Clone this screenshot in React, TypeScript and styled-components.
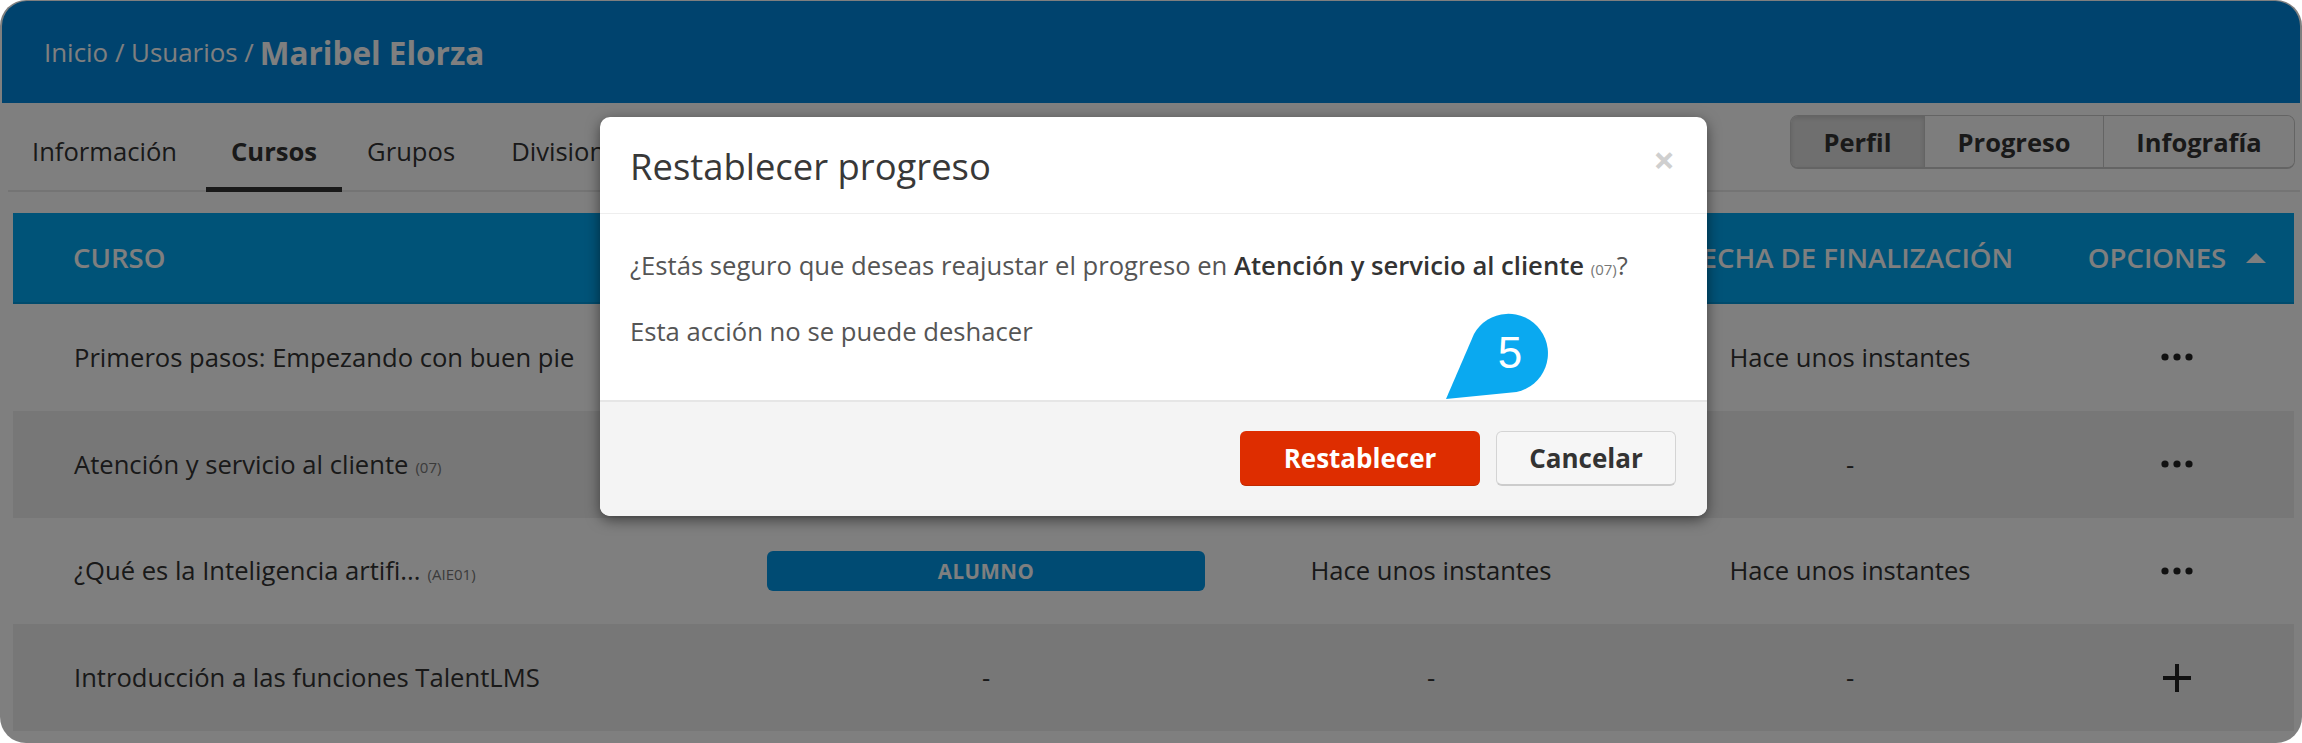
import React from 'react';
import styled, { createGlobalStyle } from 'styled-components';

const GlobalStyle = createGlobalStyle`
  html, body {
    margin: 0;
    padding: 0;
    background: #fff;
  }
  body {
    font-family: 'Open Sans', 'Liberation Sans', sans-serif;
    overflow: hidden;
  }
`;

const Frame = styled.div`
  position: relative;
  width: 2302px;
  height: 743px;
  box-sizing: border-box;
  overflow: hidden;
  border-radius: 26px;
  background: #fff;
  color: #333;
`;
const TopBar = styled.header`
  height: 102px;
  margin: 1px 2px 0 2px;
  border-radius: 25px 25px 0 0;
  box-sizing: border-box;
  padding: 0 42px 0;
  display: flex;
  align-items: center;
  gap: 6px;
  background: #0086dc;
  color: #fff;
  font-size: 25.9px;
`;
const Crumbs = styled.span``;
const Current = styled.strong`
  font-size: 31.5px;
  font-weight: 700;
`;
const NavRow = styled.div`
  height: 89px;
  margin: 0 2px 0 8px;
  box-sizing: border-box;
  padding: 12px 5px 0 24px;
  border-bottom: 2px solid #e8e8e8;
  display: flex;
  justify-content: space-between;
  align-items: flex-start;
`;
const Tabs = styled.nav`
  display: flex;
  height: 77px;
  gap: 0;
`;
const Tab = styled.a<{ $active?: boolean }>`
  box-sizing: border-box;
  height: 77px;
  padding: 0 25px;
  display: flex;
  align-items: center;
  font-size: 25.6px;
  font-weight: ${({ $active }) => ($active ? 700 : 400)};
  color: #333;
  border-bottom: ${({ $active }) => ($active ? '5px solid #333' : '5px solid transparent')};
  white-space: nowrap;
  &:first-child {
    padding-left: 0;
    padding-right: 29px;
  }
  &:last-child {
    margin-left: 6px;
  }
`;
const SwitchGroup = styled.div`
  display: flex;
  height: 54px;
  box-sizing: border-box;
  border: 1px solid #c8c8c8;
  border-bottom-width: 2px;
  border-radius: 8px;
  overflow: hidden;
  background: #fafafa;
`;
const SwitchButton = styled.button<{ $active?: boolean; $width: number }>`
  width: ${({ $width }) => $width}px;
  border: 0;
  border-right: 1px solid #c8c8c8;
  padding: 0;
  font-family: inherit;
  font-size: 25.5px;
  font-weight: 700;
  color: #333;
  background: ${({ $active }) => ($active ? '#dedede' : '#fafafa')};
  box-shadow: ${({ $active }) => ($active ? 'inset 0 2px 4px rgba(0,0,0,.12)' : 'none')};
  &:last-child {
    border-right: 0;
  }
`;
const Table = styled.div`
  margin: 21px 8px 0 13px;
`;
const Cols = `
  display: grid;
  grid-template-columns: 711px 524px 366px 472px 182px;
  padding-right: 26px;
  align-items: center;
`;
const HeadRow = styled.div`
  ${Cols}
  height: 91px;
  padding-bottom: 2px;
  background: #00a6f0;
  border-bottom: 2px solid #0096da;
  box-sizing: border-box;
  color: #fff;
  font-size: 27.6px;
  font-weight: 600;
`;
const HeadCell = styled.div<{ $left?: boolean }>`
  text-align: ${({ $left }) => ($left ? 'left' : 'center')};
  padding-left: ${({ $left }) => ($left ? '60px' : '0')};
  white-space: nowrap;
`;
const SortArrow = styled.span`
  display: inline-block;
  margin-left: 20px;
  vertical-align: 5px;
  border-left: 10px solid transparent;
  border-right: 10px solid transparent;
  border-bottom: 10px solid #fff;
`;
const Row = styled.div<{ $alt?: boolean }>`
  ${Cols}
  height: 106.75px;
  background: ${({ $alt }) => ($alt ? '#eeeeee' : '#fff')};
  font-size: 25.6px;
`;
const Cell = styled.div<{ $left?: boolean }>`
  display: flex;
  justify-content: ${({ $left }) => ($left ? 'flex-start' : 'center')};
  align-items: center;
  padding-left: ${({ $left }) => ($left ? '61px' : '0')};
  gap: 7px;
  white-space: nowrap;
`;
const Code = styled.small`
  font-size: 15px;
  color: #777;
  margin-top: 6px;
`;
const RoleBadge = styled.div`
  width: 438px;
  height: 40px;
  border-radius: 6px;
  background: #0096e6;
  color: #fff;
  font-size: 20.5px;
  font-weight: 700;
  display: flex;
  align-items: center;
  justify-content: center;
  letter-spacing: 0.5px;
`;
const Dim = styled.div`
  position: absolute;
  inset: 0;
  background: rgba(0, 0, 0, 0.5);
`;
const Modal = styled.div`
  position: absolute;
  left: 600px;
  top: 117px;
  width: 1107px;
  height: 399px;
  display: flex;
  flex-direction: column;
  border-radius: 10px;
  background: #fff;
  overflow: hidden;
  box-shadow: 0 4px 14px rgba(0, 0, 0, 0.5);
`;
const ModalHead = styled.div`
  height: 97px;
  flex: none;
  box-sizing: border-box;
  padding: 2px 30px 0 30px;
  border-bottom: 1px solid #eee;
  display: flex;
  align-items: center;
  justify-content: space-between;
`;
const ModalTitle = styled.h3`
  margin: 0;
  font-size: 36.4px;
  font-weight: 500;
  color: #383838;
`;
const CloseMark = styled.span`
  font-size: 38px;
  font-weight: 700;
  color: #cfcfcf;
  margin: -14px 2px 0 0;
`;
const ModalBody = styled.div`
  flex: 1;
  padding: 34px 30px 0;
  font-size: 25.65px;
  color: #555;
  p {
    margin: 0 0 27px;
    line-height: 35px;
  }
  b {
    font-weight: 600;
    color: #333;
  }
`;
const ModalFoot = styled.div`
  height: 116px;
  flex: none;
  box-sizing: border-box;
  padding: 0 31px 2px 0;
  border-top: 2px solid #e6e6e6;
  background: #f4f4f4;
  display: flex;
  justify-content: flex-end;
  align-items: center;
  gap: 16px;
`;
const Primary = styled.button`
  width: 240px;
  height: 55px;
  border: 0;
  border-bottom: 1px solid #c02a00;
  border-radius: 6px;
  background: #de2d00;
  color: #fff;
  font-family: inherit;
  font-size: 26px;
  font-weight: 700;
`;
const Secondary = styled.button`
  width: 180px;
  height: 55px;
  border: 1px solid #d4d4d4;
  border-bottom: 2px solid #ccc;
  border-radius: 6px;
  background: #f6f6f6;
  color: #333;
  font-family: inherit;
  font-size: 26px;
  font-weight: 700;
`;
const Callout = styled.svg`
  position: absolute;
  left: 1440px;
  top: 310px;
`;

const rows = [
  { title: 'Primeros pasos: Empezando con buen pie', done: 'Hace unos instantes', action: 'dots' },
  { title: 'Atención y servicio al cliente', code: '(07)', done: '-', action: 'dots', alt: true },
  { title: '¿Qué es la Inteligencia artifi...', code: '(AIE01)', role: 'ALUMNO', enrolled: 'Hace unos instantes', done: 'Hace unos instantes', action: 'dots' },
  { title: 'Introducción a las funciones TalentLMS', enrolled: '-', role: '-', done: '-', action: 'plus', alt: true },
];

function Dots() {
  return (
    <svg width="32" height="8" viewBox="0 0 32 8">
      <circle cx="4" cy="4" r="3.6" fill="#222" />
      <circle cx="16" cy="4" r="3.6" fill="#222" />
      <circle cx="28" cy="4" r="3.6" fill="#222" />
    </svg>
  );
}

function Plus() {
  return (
    <svg width="30" height="30" viewBox="0 0 30 30">
      <path d="M15 1v28M1 15h28" stroke="#222" strokeWidth="4" fill="none" />
    </svg>
  );
}

function App() {
  return (
    <>
      <GlobalStyle />
      <Frame>
        <TopBar>
          <Crumbs>Inicio / Usuarios /</Crumbs>
          <Current>Maribel Elorza</Current>
        </TopBar>
        <NavRow>
          <Tabs>
            <Tab>Información</Tab>
            <Tab $active>Cursos</Tab>
            <Tab>Grupos</Tab>
            <Tab>Divisiones</Tab>
          </Tabs>
          <SwitchGroup>
            <SwitchButton $active $width={134}>Perfil</SwitchButton>
            <SwitchButton $width={179}>Progreso</SwitchButton>
            <SwitchButton $width={190}>Infografía</SwitchButton>
          </SwitchGroup>
        </NavRow>
        <Table>
          <HeadRow>
            <HeadCell $left>CURSO</HeadCell>
            <HeadCell />
            <HeadCell />
            <HeadCell>FECHA DE FINALIZACIÓN</HeadCell>
            <HeadCell>OPCIONES<SortArrow /></HeadCell>
          </HeadRow>
          {rows.map((row) => (
            <Row key={row.title} $alt={row.alt}>
              <Cell $left>
                {row.title}
                {row.code && <Code>{row.code}</Code>}
              </Cell>
              <Cell>{row.role === 'ALUMNO' ? <RoleBadge>ALUMNO</RoleBadge> : row.role}</Cell>
              <Cell>{row.enrolled}</Cell>
              <Cell>{row.done}</Cell>
              <Cell>{row.action === 'plus' ? <Plus /> : <Dots />}</Cell>
            </Row>
          ))}
        </Table>
        <Dim />
        <Modal>
          <ModalHead>
            <ModalTitle>Restablecer progreso</ModalTitle>
            <CloseMark>×</CloseMark>
          </ModalHead>
          <ModalBody>
            <p>
              ¿Estás seguro que deseas reajustar el progreso en <b>Atención y servicio al cliente</b> <Code>(07)</Code>?
            </p>
            <p>Esta acción no se puede deshacer</p>
          </ModalBody>
          <ModalFoot>
            <Primary>Restablecer</Primary>
            <Secondary>Cancelar</Secondary>
          </ModalFoot>
        </Modal>
        <Callout width="115" height="95" viewBox="0 0 115 95">
          <path d="M6 89 L34 24 A39.5 39.5 0 1 1 76.5 82 Z" fill="#0aa9f0" />
          <text x="70" y="58" textAnchor="middle" fontFamily="Liberation Sans" fontSize="44" fill="#fff">5</text>
        </Callout>
      </Frame>
    </>
  );
}

export default App;
